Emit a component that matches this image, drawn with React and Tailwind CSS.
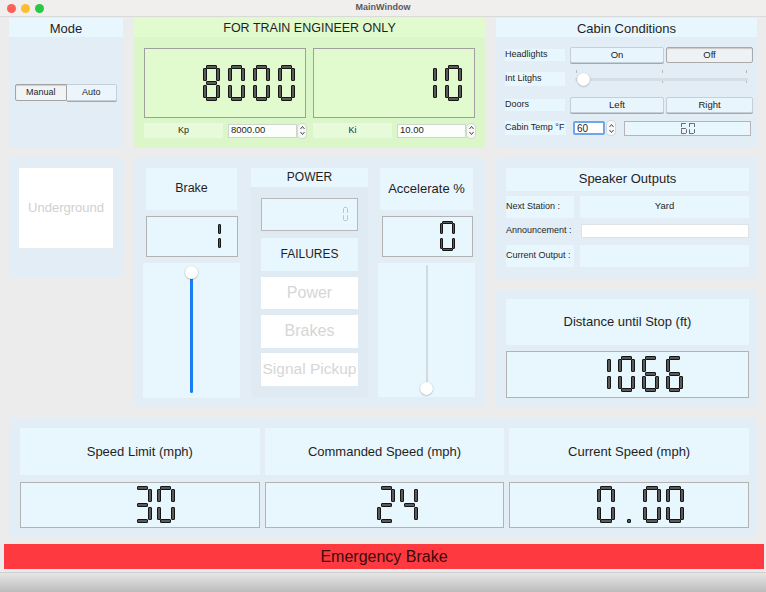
import React from "react";

const SEGMENTS = {
  "0": "abcdef",
  "1": "bc",
  "2": "abged",
  "3": "abgcd",
  "4": "fgbc",
  "5": "afgcd",
  "6": "afgedc",
  "7": "abc",
  "8": "abcdefg",
  "9": "abcdfg",
  " ": "",
};

function Digit({ ch, w, h, t, segClass }) {
  if (ch === ".") {
    return (
      <div className="relative shrink-0" style={{ width: w, height: h }}>
        <div
          className={`absolute rounded-[1px] ${segClass}`}
          style={{ left: (w - t) / 2, top: h - t, width: t, height: t }}
        />
      </div>
    );
  }
  const on = SEGMENTS[ch] || "";
  const inset = t * 0.8;
  const half = h / 2;
  const vh = half - t * 1.2;
  const geo = {
    a: { left: inset, top: 0, width: w - 2 * inset, height: t },
    g: { left: inset, top: half - t / 2, width: w - 2 * inset, height: t },
    d: { left: inset, top: h - t, width: w - 2 * inset, height: t },
    f: { left: 0, top: t * 0.7, width: t, height: vh },
    b: { left: w - t, top: t * 0.7, width: t, height: vh },
    e: { left: 0, top: half + t * 0.5, width: t, height: vh },
    c: { left: w - t, top: half + t * 0.5, width: t, height: vh },
  };
  return (
    <div className="relative shrink-0" style={{ width: w, height: h }}>
      {on.split("").map((s) => (
        <div key={s} className={`absolute rounded-[1px] ${segClass}`} style={geo[s]} />
      ))}
    </div>
  );
}

// QLCDNumber-like display; the value stays as real (transparent) text over the segments
function Lcd({ value, w, h, t, gap, className, segClass = "border border-[#151515] bg-[#5a5a5a]" }) {
  const fontSize = Math.min(h * 0.75, w / 0.62);
  return (
    <div className={className}>
      <div className="relative flex items-center" style={{ gap }}>
        {value.split("").map((ch, i) => (
          <Digit key={i} ch={ch} w={w} h={h} t={t} segClass={segClass} />
        ))}
        <span
          className="absolute inset-0 flex items-center justify-end whitespace-nowrap font-['Liberation_Mono',monospace] leading-none text-transparent"
          style={{ fontSize }}
        >
          {value}
        </span>
      </div>
    </div>
  );
}

function SpinArrows() {
  return (
    <span className="flex h-[14px] w-[8px] items-center justify-center rounded-[3px] bg-[#f7f7f7] shadow-[0_0_0_0.5px_#c4c4c4]">
      <svg width="7" height="13" viewBox="0 0 7 13">
        <path d="M1.5 5 L3.5 2.5 L5.5 5" fill="none" stroke="#4a4a4a" strokeWidth="1" />
        <path d="M1.5 8 L3.5 10.5 L5.5 8" fill="none" stroke="#4a4a4a" strokeWidth="1" />
      </svg>
    </span>
  );
}

function Header({ children, className = "" }) {
  return (
    <div className={`flex items-center justify-center bg-[#e8f6fe] text-[#1f1f1f] ${className}`}>
      {children}
    </div>
  );
}

function MacButton({ children, active, className = "" }) {
  return (
    <div
      className={`flex items-center justify-center rounded-[2px] text-[9.5px] text-[#222] ${
        active
          ? "bg-[#eef2f4] border border-[#a9a9a9] shadow-[inset_0_1px_1px_#c8c8c8]"
          : "bg-[#e9f5fc] border border-[#c6cfd6] shadow-[0_1px_0_#a8a8a8]"
      } ${className}`}
    >
      {children}
    </div>
  );
}

export default function App() {
  return (
    <div className="flex h-[592px] w-[766px] flex-col overflow-hidden bg-[#ececec] font-['Liberation_Sans',Arial,sans-serif] text-[#1f1f1f]">
      {/* TITLE BAR */}
      <div className="relative flex h-[17px] shrink-0 items-center justify-center border-b border-[#dadada] bg-[#f0efee]">
        <div className="absolute left-[7px] top-[4px] flex gap-[5px]">
          <span className="h-[9px] w-[9px] rounded-full bg-[#fe5f57]" />
          <span className="h-[9px] w-[9px] rounded-full bg-[#febc2e]" />
          <span className="h-[9px] w-[9px] rounded-full bg-[#28c840]" />
        </div>
        <span className="text-[9px] font-bold text-[#5a5a5a]">MainWindow</span>
      </div>

      {/* ROW 1 */}
      <div className="ml-[9px] mt-[1px] flex h-[130px] gap-[11px]">
        {/* Mode */}
        <div className="flex w-[114px] flex-col">
          <Header className="h-[19px] pt-[2px] text-[13px]">Mode</Header>
          <div className="flex flex-1 items-center justify-center rounded-[4px] bg-[#e2edf6]">
            <div className="flex h-[17px] w-[102px] text-[9px]">
              <div className="flex flex-1 items-center justify-center rounded-l-[2px] border border-[#a3a3a3] bg-[#f1f4f6] shadow-[inset_0_1px_1px_#cfcfcf]">
                Manual
              </div>
              <div className="flex flex-1 items-center justify-center rounded-r-[2px] border border-l-0 border-[#c6cfd6] bg-[#ebf5fb] shadow-[0_1px_0_#a8a8a8]">
                Auto
              </div>
            </div>
          </div>
        </div>

        {/* Engineer */}
        <div className="flex w-[351px] flex-col">
          <div className="flex h-[19px] items-center justify-center bg-[#e1fbcf] pt-[2px] text-[12.5px]">
            FOR TRAIN ENGINEER ONLY
          </div>
          <div className="flex flex-1 flex-col rounded-[4px] bg-[#dbf6c8] px-[10px] pt-[11px]">
            <div className="flex gap-[7px]">
              <Lcd
                value="8000"
                w={17}
                h={36}
                t={4}
                gap={8}
                className="flex h-[70px] w-[162px] items-center justify-end border border-[#9f9f9f] bg-[#e1fbcf] pr-[10px]"
              />
              <Lcd
                value="10"
                w={17}
                h={36}
                t={4}
                gap={8}
                className="flex h-[70px] w-[162px] items-center justify-end border border-[#9f9f9f] bg-[#e1fbcf] pr-[12px]"
              />
            </div>
            <div className="mt-[5px] flex gap-[7px]">
              {[
                ["Kp", "8000.00"],
                ["Ki", "10.00"],
              ].map(([label, val]) => (
                <div key={label} className="flex h-[15px] w-[162px] items-center">
                  <div className="flex h-full w-[79px] items-center justify-center bg-[#e7fbda] text-[9px]">
                    {label}
                  </div>
                  <div className="ml-[5px] flex h-[14px] w-[69px] items-center border border-[#cfd6cb] bg-[#fbfefa] px-[2px] text-[9.5px]">
                    {val}
                  </div>
                  <div className="ml-[1px] flex w-[8px] justify-center">
                    <SpinArrows />
                  </div>
                </div>
              ))}
            </div>
          </div>
        </div>

        {/* Cabin Conditions */}
        <div className="flex w-[261px] flex-col">
          <Header className="h-[19px] pt-[2px] text-[13px]">Cabin Conditions</Header>
          <div className="flex flex-1 flex-col rounded-[4px] bg-[#e2edf6] pl-[9px] pt-[10px] text-[9px]">
            <div className="flex h-[16px] items-center">
              <div className="flex h-[12px] w-[60px] items-center bg-[#e8f6fe]">Headlights</div>
              <MacButton className="ml-[5px] h-[16px] w-[94px]">On</MacButton>
              <MacButton active className="ml-[2px] h-[16px] w-[87px]">
                Off
              </MacButton>
            </div>
            <div className="mt-[7px] flex h-[17px] items-center">
              <div className="flex h-[14px] w-[60px] items-center bg-[#e8f6fe]">Int Litghs</div>
              <div className="relative ml-[10px] h-[17px] w-[173px]">
                <div className="absolute left-[1px] top-[0px] h-[3px] w-[1px] bg-[#b9b9b9]" />
                <div className="absolute left-[87px] top-[0px] h-[3px] w-[1px] bg-[#b9b9b9]" />
                <div className="absolute right-[1px] top-[0px] h-[3px] w-[1px] bg-[#b9b9b9]" />
                <div className="absolute left-[87px] top-[10px] h-[3px] w-[1px] bg-[#b9b9b9]" />
                <div className="absolute right-[1px] top-[10px] h-[3px] w-[1px] bg-[#b9b9b9]" />
                <div className="absolute left-0 right-0 top-[8px] h-[3px] rounded-full bg-[#d6dde2]" />
                <div className="absolute left-[2px] top-[3px] h-[13px] w-[13px] rounded-full bg-white shadow-[0_0.5px_1.5px_rgba(0,0,0,0.35)]" />
              </div>
            </div>
            <div className="mt-[10px] flex h-[16px] items-center">
              <div className="flex h-[12px] w-[60px] items-center bg-[#e8f6fe]">Doors</div>
              <MacButton className="ml-[5px] h-[16px] w-[94px]">Left</MacButton>
              <MacButton className="ml-[2px] h-[16px] w-[87px]">Right</MacButton>
            </div>
            <div className="mt-[7px] flex h-[16px] items-center">
              <div className="flex h-[14px] w-[61px] items-center bg-[#e8f6fe]">Cabin Temp °F</div>
              <div className="ml-[7px] flex h-[14px] w-[32px] items-center rounded-[2px] border-2 border-[#6fa6e8] bg-white px-[2px] text-[10px]">
                60
              </div>
              <div className="ml-[2px] flex w-[8px] justify-center">
                <SpinArrows />
              </div>
              <Lcd
                value="60"
                w={6}
                h={11}
                t={1}
                gap={2}
                segClass="bg-[#6d6d6d]"
                className="ml-[9px] flex h-[15px] w-[127px] items-center justify-center border border-[#b5b5b5] bg-[#e8f6fe]"
              />
            </div>
          </div>
        </div>
      </div>

      {/* ROW 2 */}
      <div className="ml-[9px] mt-[10px] flex h-[250px] gap-[11px]">
        {/* Underground */}
        <div className="w-[114px]">
          <div className="flex h-[120px] flex-col rounded-[4px] bg-[#e2edf6] px-[10px] pt-[10px]">
            <div className="flex h-[80px] items-center justify-center bg-white text-[13px] text-[#d0d0d0]">
              Underground
            </div>
          </div>
        </div>

        {/* Controls */}
        <div className="flex h-[249px] w-[351px] gap-[11px] rounded-[4px] bg-[#e2edf6] pl-[9px] pt-[10px]">
          {/* Brake */}
          <div className="flex w-[97px] flex-col">
            <Header className="mx-[3px] h-[42px] text-[12.5px]">Brake</Header>
            <Lcd
              value="1"
              w={14}
              h={29}
              t={3}
              gap={6}
              className="ml-[3px] mt-[6px] flex h-[41px] w-[92px] items-center justify-end border border-[#b3b3b3] bg-[#e8f6fe] pr-[16px]"
            />
            <div className="mt-[6px] flex h-[135px] justify-center bg-[#e8f6fe]">
              <div className="relative h-full w-[13px]">
                <div className="absolute bottom-[5px] left-[5px] top-[14px] w-[3px] rounded-full bg-[#1a7cf6]" />
                <div className="absolute left-0 top-[3px] h-[13px] w-[13px] rounded-full bg-white shadow-[0_0.5px_1.5px_rgba(0,0,0,0.35)]" />
              </div>
            </div>
          </div>

          {/* Power / failures */}
          <div className="flex w-[117px] flex-col">
            <Header className="h-[19px] text-[12px]">POWER</Header>
            <div className="flex h-[211px] flex-col rounded-b-[4px] bg-[#dfeaf3] px-[10px] pt-[11px]">
              <Lcd
                value="0"
                w={5}
                h={14}
                t={1}
                gap={2}
                segClass="bg-[#c2c2c2]"
                className="flex h-[33px] items-center justify-end border border-[#b8b8b8] bg-[#e8f6fe] pr-[9px]"
              />
              <Header className="mt-[7px] h-[33px] text-[12px]">FAILURES</Header>
              <div className="mt-[6px] flex h-[32px] items-center justify-center bg-white text-[16px] text-[#d6d6d6]">
                Power
              </div>
              <div className="mt-[6px] flex h-[33px] items-center justify-center bg-white text-[16px] text-[#d6d6d6]">
                Brakes
              </div>
              <div className="mt-[5px] flex h-[33px] items-center justify-center whitespace-nowrap bg-white text-[15.5px] text-[#d6d6d6]">
                Signal Pickup
              </div>
            </div>
          </div>

          {/* Accelerate */}
          <div className="-ml-[1px] flex w-[97px] flex-col">
            <Header className="mx-[2px] h-[42px] text-[13px]">Accelerate %</Header>
            <Lcd
              value="0"
              w={15}
              h={30}
              t={3}
              gap={6}
              className="ml-[4px] mt-[6px] flex h-[41px] w-[91px] items-center justify-end border border-[#b3b3b3] bg-[#e8f6fe] pr-[17px]"
            />
            <div className="mt-[6px] flex h-[134px] justify-center bg-[#e8f6fe]">
              <div className="relative h-full w-[13px]">
                <div className="absolute bottom-[9px] left-[5.5px] top-[2px] w-[2px] rounded-full bg-[#d3dadf]" />
                <div className="absolute bottom-[2px] left-0 h-[13px] w-[13px] rounded-full bg-white shadow-[0_0.5px_1.5px_rgba(0,0,0,0.35)]" />
              </div>
            </div>
          </div>
        </div>

        {/* Right column */}
        <div className="flex w-[261px] flex-col gap-[11px]">
          <div className="flex h-[121px] flex-col rounded-[4px] bg-[#e2edf6] pl-[10px] pr-[8px] pt-[10px] text-[9px]">
            <Header className="h-[23px] text-[13px]">Speaker Outputs</Header>
            <div className="mt-[5px] flex h-[22px]">
              <div className="flex w-[68px] items-center bg-[#e8f6fe]">Next Station :</div>
              <div className="ml-[6px] flex flex-1 items-center justify-center bg-[#e8f6fe] text-[9.5px]">
                Yard
              </div>
            </div>
            <div className="mt-[6px] flex h-[14px]">
              <div className="flex w-[68px] items-center whitespace-nowrap">Announcement :</div>
              <div className="ml-[7px] flex-1 border border-[#dde3e7] bg-white" />
            </div>
            <div className="mt-[7px] flex h-[22px]">
              <div className="flex w-[68px] items-center whitespace-nowrap bg-[#e8f6fe]">Current Output :</div>
              <div className="ml-[6px] flex-1 bg-[#e8f6fe]" />
            </div>
          </div>
          <div className="flex h-[118px] flex-col rounded-[4px] bg-[#e2edf6] pl-[10px] pr-[8px] pt-[9px]">
            <Header className="h-[46px] text-[13px]">Distance until Stop (ft)</Header>
            <Lcd
              value="1066"
              w={17}
              h={36}
              t={4}
              gap={7}
              className="mt-[6px] flex h-[47px] items-center justify-end border border-[#b3b3b3] bg-[#e8f6fe] pr-[65px]"
            />
          </div>
        </div>
      </div>

      {/* ROW 3 */}
      <div className="ml-[9px] mt-[10px] grid h-[120px] w-[748px] grid-cols-3 gap-x-[5px] rounded-[4px] bg-[#e2edf6] pl-[11px] pr-[8px] pt-[10px]">
        {[
          ["Speed Limit (mph)", "30", "pr-[84px]"],
          ["Commanded Speed (mph)", "24", "pr-[85px]"],
          ["Current Speed (mph)", "0.00", "pr-[64px]"],
        ].map(([label, val, pr]) => (
          <div key={label} className="flex flex-col">
            <Header className="h-[47px] pt-[2px] text-[13px]">{label}</Header>
            <Lcd
              value={val}
              w={18}
              h={37}
              t={4}
              gap={5}
              className={`mt-[7px] flex h-[46px] items-center justify-end border border-[#b3b3b3] bg-[#e8f6fe] ${pr}`}
            />
          </div>
        ))}
      </div>

      {/* EMERGENCY BRAKE */}
      <div className="ml-[4px] mt-[7px] flex h-[25px] w-[760px] items-center justify-center bg-[#fe3a40] pt-[1px] text-[16px] text-[#3a0b0d]">
        Emergency Brake
      </div>

      {/* BOTTOM */}
      <div className="mt-[3px] h-[20px] border-t border-[#cfcfcf] bg-gradient-to-b from-[#e6e6e6] to-[#bdbdbd]" />
    </div>
  );
}
